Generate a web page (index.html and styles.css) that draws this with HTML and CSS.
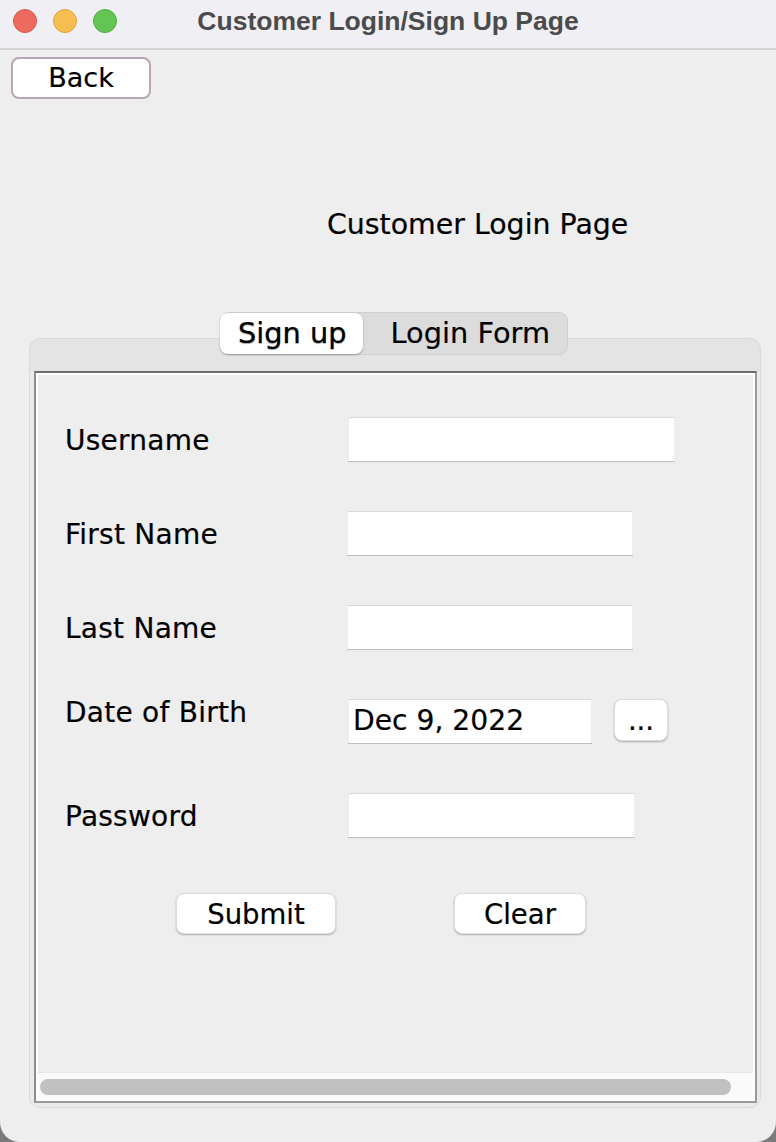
FILE: index.html
```html
<!DOCTYPE html>
<html>
<head>
<meta charset="utf-8">
<title>Customer Login/Sign Up Page</title>
<link rel="stylesheet" href="styles.css">
</head>
<body>
<div class="window">
  <div class="titlebar">
    <div class="lights">
      <span class="light red"></span>
      <span class="light yellow"></span>
      <span class="light green"></span>
    </div>
    <div class="title">Customer Login/Sign Up Page</div>
  </div>
  <div class="content">
    <button class="back">Back</button>
    <div class="heading">Customer Login Page</div>
    <div class="tabs">
      <div class="tab active">Sign up</div>
      <div class="tab">Login Form</div>
    </div>
    <div class="panel">
      <div class="scrollbox">
        <div class="form">
          <div class="row">
            <div class="label">Username</div>
            <div class="field w-user"></div>
          </div>
          <div class="row">
            <div class="label">First Name</div>
            <div class="field w-name"></div>
          </div>
          <div class="row">
            <div class="label">Last Name</div>
            <div class="field w-name"></div>
          </div>
          <div class="row row-date">
            <div class="label label-high">Date of Birth</div>
            <div class="field w-date">Dec 9, 2022</div>
            <button class="btn dots">...</button>
          </div>
          <div class="row">
            <div class="label">Password</div>
            <div class="field w-pass"></div>
          </div>
          <div class="actions">
            <button class="btn submit">Submit</button>
            <button class="btn clear">Clear</button>
          </div>
        </div>
        <div class="hscroll">
          <div class="thumb"></div>
        </div>
      </div>
    </div>
  </div>
</div>
</body>
</html>
```

FILE: styles.css
```css
* { box-sizing: border-box; }
html, body { margin: 0; padding: 0; }
body {
  background: #7a7a7a;
  font-family: "DejaVu Sans", "Noto Sans", sans-serif;
  color: #000;
}
.window {
  width: 776px;
  height: 1142px;
  background: #eeeeee;
  border-radius: 0 0 20px 20px;
  overflow: hidden;
  display: flex;
  flex-direction: column;
}
.titlebar {
  height: 50px;
  background: #f0eff4;
  border-bottom: 2px solid #d3d2d7;
  display: flex;
  align-items: center;
  position: relative;
  flex: none;
}
.lights {
  display: flex;
  gap: 16px;
  padding-left: 13px;
  margin-top: -6px;
}
.light {
  width: 24px;
  height: 24px;
  border-radius: 50%;
  display: block;
}
.red { background: #ee6a5f; border: 1px solid #d65a4f; }
.yellow { background: #f6be50; border: 1px solid #dea43c; }
.green { background: #62c554; border: 1px solid #4fae42; }
.title {
  position: absolute;
  left: 0;
  right: 0;
  top: 4px;
  text-align: center;
  font-family: "Liberation Sans", Arial, sans-serif;
  font-weight: bold;
  font-size: 26.5px;
  line-height: 34px;
  color: #4b4b4d;
}
.content {
  display: flex;
  flex-direction: column;
  align-items: flex-start;
  -webkit-text-stroke: 0.2px #000;
}
.back {
  margin: 7px 0 0 11px;
  width: 140px;
  height: 42px;
  background: #fff;
  border: 2px solid #b9a7b5;
  border-radius: 8px;
  font-family: "DejaVu Sans", sans-serif;
  font-size: 27px;
  line-height: 34px;
  padding: 0;
  color: #000;
}
.heading {
  margin: 109px 0 0 327px;
  font-size: 28.4px;
  line-height: 34px;
}
.tabs {
  position: relative;
  z-index: 1;
  align-self: center;
  margin: 70px 0 -17px 12px;
  height: 43px;
  display: flex;
  background: #dcdcdc;
  border: 1px solid #d0d0d0;
  border-radius: 9px;
}
.tab {
  font-size: 28.8px;
  line-height: 41px;
  padding: 0 17px 0 28px;
  color: #000;
}
.tab.active {
  background: #fff;
  border-radius: 8px;
  padding: 0 16px 0 18px;
  box-shadow: 0 1px 2px rgba(0,0,0,0.3);
  margin: 0 0 0 -1px;
  text-shadow: 0 1px 1px rgba(0,0,0,0.35);
}
.panel {
  margin: 0 15px 0 29px;
  width: 732px;
  height: 770px;
  background: linear-gradient(#e4e4e4, #e4e4e4 33px, #eaeaea 33px);
  border: 1px solid #dadada;
  border-radius: 11px;
  padding: 32px 3px 4px 4px;
}
.scrollbox {
  height: 732px;
  border: 2px solid;
  border-color: #6b6b6b #9a9a9a #9a9a9a #8e8e8e;
  padding: 2px;
  background: #fff;
  display: flex;
  flex-direction: column;
}
.form {
  flex: 1;
  background: #eeeeee;
  padding: 42px 0 0 27px;
  display: flex;
  flex-direction: column;
  gap: 50px;
}
.row {
  height: 44px;
  display: flex;
  align-items: center;
}
.row-date { align-items: flex-start; }
.label {
  width: 283px;
  font-size: 28px;
  letter-spacing: 0.25px;
  line-height: 34px;
  margin-top: 4px;
  flex: none;
}
.label-high { margin-top: -3px; }
.field {
  height: 44px;
  background: #fff;
  border-top: 1px solid #d9d9d9;
  border-left: 1px solid #ececec;
  border-right: 1px solid #ececec;
  box-shadow: 0 1px 0 #bdbdbd;
  font-size: 28.2px;
  line-height: 42px;
  padding-left: 4px;
  flex: none;
}
.w-user { width: 327px; }
.w-name { width: 286px; margin-left: -1px; }
.w-date { width: 244px; }
.w-pass { width: 287px; }
.btn {
  background: #fff;
  border: 1px solid #dcdcdc;
  border-radius: 8px;
  box-shadow: 0 1px 2px rgba(0,0,0,0.28);
  font-family: "DejaVu Sans", sans-serif;
  font-size: 27.5px;
  line-height: 34px;
  color: #000;
  padding: 0;
  -webkit-text-stroke: 0.2px #000;
}
.dots {
  width: 54px;
  height: 42px;
  margin-left: 22px;
  line-height: 30px;
}
.actions {
  display: flex;
  gap: 118px;
  margin: 6px 0 0 111px;
}
.submit { width: 160px; height: 41px; }
.clear { width: 132px; height: 41px; }
.hscroll {
  height: 27px;
  background: #fafafa;
  border-top: 1px solid #e6e6e6;
  padding: 6px 0 0 2px;
  flex: none;
}
.thumb {
  width: 691px;
  height: 16px;
  border-radius: 8px;
  background: #c1c1c1;
}
```
